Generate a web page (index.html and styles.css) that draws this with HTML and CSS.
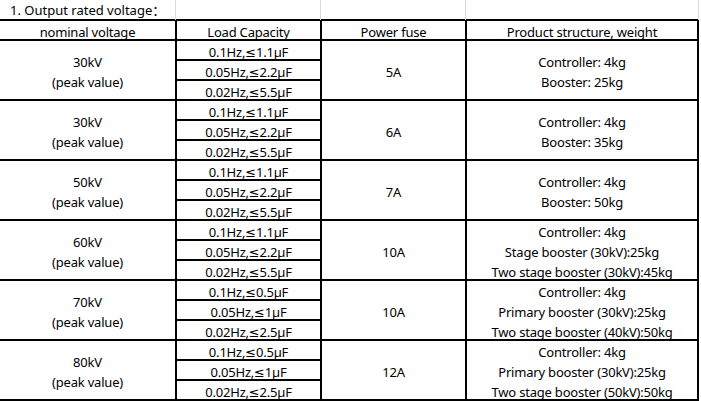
FILE: index.html
```html
<!DOCTYPE html>
<html>
<head>
<meta charset="utf-8">
<link rel="stylesheet" href="styles.css">
</head>
<body>
<div class="sheet">
  <div class="title-row">
    <div class="tcell title">1. Output rated voltage：</div>
    <div class="tcell"></div>
    <div class="tcell"></div>
    <div class="tcell"></div>
  </div>
  <div class="table">
    <div class="cell">nominal voltage</div>
    <div class="cell">Load Capacity</div>
    <div class="cell">Power fuse</div>
    <div class="cell">Product structure, weight</div>

    <div class="cell span"><div>30kV</div><div>(peak value)</div></div>
    <div class="cell">0.1Hz,≤1.1µF</div>
    <div class="cell span">5A</div>
    <div class="cell span"><div>Controller: 4kg</div><div>Booster: 25kg</div></div>
    <div class="cell">0.05Hz,≤2.2µF</div>
    <div class="cell">0.02Hz,≤5.5µF</div>

    <div class="cell span"><div>30kV</div><div>(peak value)</div></div>
    <div class="cell">0.1Hz,≤1.1µF</div>
    <div class="cell span">6A</div>
    <div class="cell span"><div>Controller: 4kg</div><div>Booster: 35kg</div></div>
    <div class="cell">0.05Hz,≤2.2µF</div>
    <div class="cell">0.02Hz,≤5.5µF</div>

    <div class="cell span"><div>50kV</div><div>(peak value)</div></div>
    <div class="cell">0.1Hz,≤1.1µF</div>
    <div class="cell span">7A</div>
    <div class="cell span"><div>Controller: 4kg</div><div>Booster: 50kg</div></div>
    <div class="cell">0.05Hz,≤2.2µF</div>
    <div class="cell">0.02Hz,≤5.5µF</div>

    <div class="cell span"><div>60kV</div><div>(peak value)</div></div>
    <div class="cell">0.1Hz,≤1.1µF</div>
    <div class="cell span">10A</div>
    <div class="cell span"><div>Controller: 4kg</div><div>Stage booster (30kV):25kg</div><div>Two stage booster (30kV):45kg</div></div>
    <div class="cell">0.05Hz,≤2.2µF</div>
    <div class="cell">0.02Hz,≤5.5µF</div>

    <div class="cell span"><div>70kV</div><div>(peak value)</div></div>
    <div class="cell">0.1Hz,≤0.5µF</div>
    <div class="cell span">10A</div>
    <div class="cell span"><div>Controller: 4kg</div><div>Primary booster (30kV):25kg</div><div>Two stage booster (40kV):50kg</div></div>
    <div class="cell">0.05Hz,≤1µF</div>
    <div class="cell">0.02Hz,≤2.5µF</div>

    <div class="cell span"><div>80kV</div><div>(peak value)</div></div>
    <div class="cell">0.1Hz,≤0.5µF</div>
    <div class="cell span">12A</div>
    <div class="cell span"><div>Controller: 4kg</div><div>Primary booster (30kV):25kg</div><div>Two stage booster (50kV):50kg</div></div>
    <div class="cell">0.05Hz,≤1µF</div>
    <div class="cell">0.02Hz,≤2.5µF</div>
  </div>
</div>
</body>
</html>
```
FILE: styles.css
```css
html, body {
  margin: 0;
  padding: 0;
  background: #fff;
}
body {
  font-family: "Noto Sans", "DejaVu Sans", "Noto Sans CJK SC", sans-serif;
  font-size: 13px;
  color: #000;
  letter-spacing: -0.2px;
}
.sheet {
  width: 701px;
  overflow: hidden;
}
.title-row {
  display: grid;
  grid-template-columns: 176px 145px 145px 233px;
  height: 19px;
}
.tcell {
  border-right: 1px solid #dadada;
}
.title {
  padding-left: 10px;
  line-height: 20px;
  white-space: nowrap;
  letter-spacing: 0;
}
.table {
  display: grid;
  grid-template-columns: 175px 143px 143px 230px;
  grid-auto-rows: 18px;
  gap: 2px;
  padding: 2px 2px 2px 0;
  background: #000;
  width: max-content;
}
.cell {
  background: #fff;
  display: flex;
  flex-direction: column;
  align-items: center;
  justify-content: center;
  text-align: center;
  line-height: 20px;
  overflow: hidden;
  white-space: nowrap;
  padding-top: 3px;
}
.span {
  grid-row: span 3;
}
```
